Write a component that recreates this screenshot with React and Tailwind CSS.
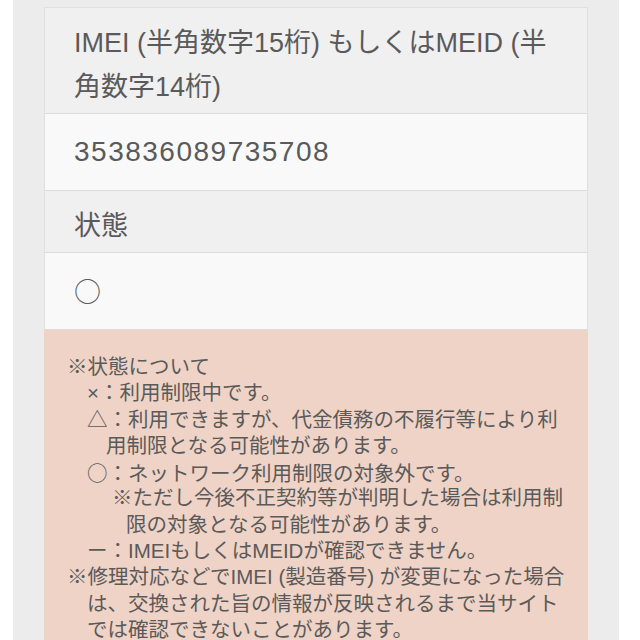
import React from "react";

const ROWS = [
  { label: "IMEI (半角数字15桁) もしくはMEID (半角数字14桁)", value: "353836089735708", mono: true },
  { label: "状態", value: "○", cjk: true },
];

function LabelRow({ children }) {
  return (
    <div className="bg-[#f0f0f0] border-b border-[#dcdcdc] pl-[29px] pr-[29px] pt-[13px] pb-[4px] text-[27px] leading-[44px]">
      {children}
    </div>
  );
}

function ValueRow({ children, mono, cjk }) {
  return (
    <div
      className={
        mono
          ? "bg-[#f9f9f9] border-b border-[#dcdcdc] pl-[29px] pr-[29px] py-[16px] text-[28px] leading-[44px] tracking-[1.5px]"
          : cjk
          ? "bg-[#f9f9f9] border-b border-[#dcdcdc] pl-[29px] pr-[29px] py-[16px] text-[27px] leading-[44px] font-['Noto_Sans_CJK_JP',sans-serif]"
          : "bg-[#f9f9f9] border-b border-[#dcdcdc] pl-[29px] pr-[29px] py-[16px] text-[27px] leading-[44px]"
      }
    >
      {children}
    </div>
  );
}

export default function App() {
  return (
    <div className="min-h-screen bg-white font-['Liberation_Sans','Noto_Sans_CJK_JP',sans-serif] text-[#5a5a5a] overflow-hidden">
      <div className="ml-[13px] w-[606px] bg-[#ececec] px-[31px] pt-[7px] min-h-[640px]">
        {/* ── result table ── */}
        <div className="border-x border-t border-[#e0e0e0]">
          {ROWS.map((r) => (
            <React.Fragment key={r.label}>
              <LabelRow>{r.label}</LabelRow>
              <ValueRow mono={r.mono} cjk={r.cjk}>{r.value}</ValueRow>
            </React.Fragment>
          ))}
        </div>

        {/* ── notes ── */}
        <div className="bg-[#efd3c6] pl-[23px] pr-[14px] pt-[24px] pb-[20px] text-[20.5px] leading-[26.3px]">
          <p>※状態について</p>
          <div className="ml-[20px]">
            <p>×：利用制限中です。</p>
            <p className="pl-[19px] indent-[-19px]">
              △：利用できますが、代金債務の不履行等により利用制限となる可能性があります。
            </p>
            <p className="font-['Noto_Sans_CJK_JP',sans-serif]">○：ネットワーク利用制限の対象外です。</p>
            <p className="ml-[25px] pl-[14px] indent-[-14px]">
              ※ただし今後不正契約等が判明した場合は利用制限の対象となる可能性があります。
            </p>
            <p>ー：IMEIもしくはMEIDが確認できません。</p>
          </div>
          <p className="pl-[20px] indent-[-20px]">
            ※修理対応などでIMEI (製造番号) が変更になった場合は、交換された旨の情報が反映されるまで当サイトでは確認できないことがあります。
          </p>
        </div>
      </div>
    </div>
  );
}
